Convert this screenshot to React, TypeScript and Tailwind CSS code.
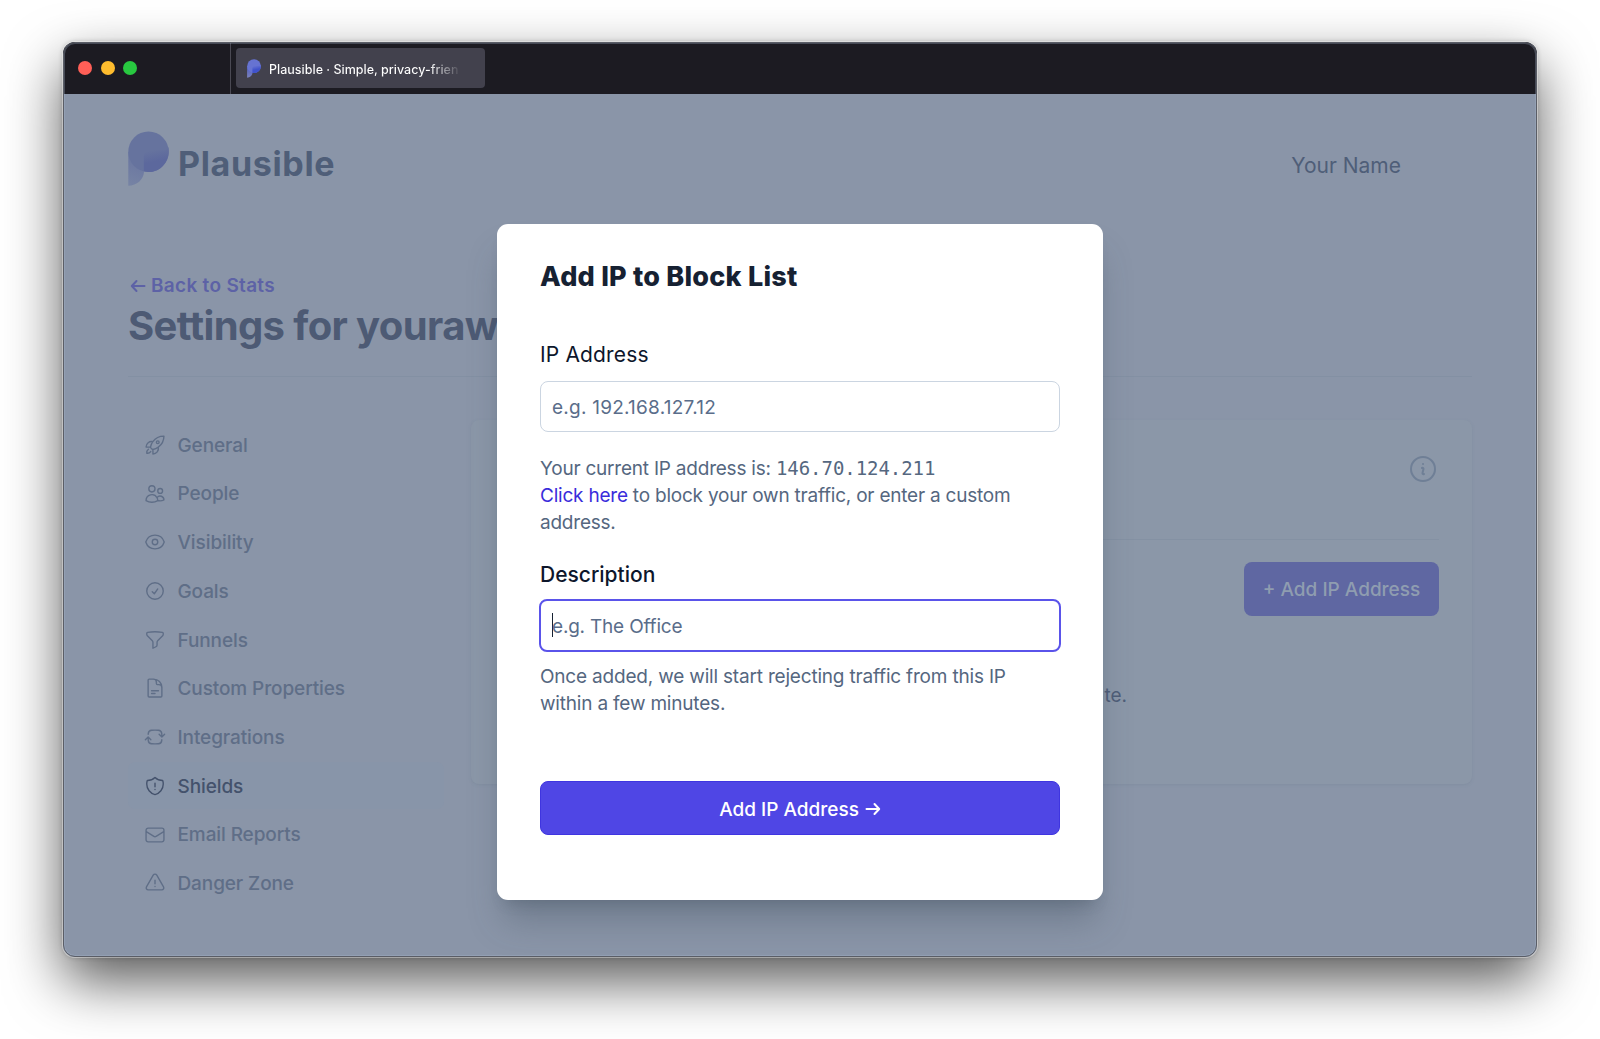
import React, { useId } from "react";
import {
  HiOutlineRocketLaunch,
  HiOutlineUsers,
  HiOutlineEye,
  HiOutlineCheckCircle,
  HiOutlineFunnel,
  HiOutlineDocumentText,
  HiOutlineArrowPathRoundedSquare,
  HiOutlineShieldExclamation,
  HiOutlineEnvelope,
  HiOutlineExclamationTriangle,
  HiOutlineInformationCircle,
} from "react-icons/hi2";

const navItems = [
  { label: "General", Icon: HiOutlineRocketLaunch },
  { label: "People", Icon: HiOutlineUsers },
  { label: "Visibility", Icon: HiOutlineEye },
  { label: "Goals", Icon: HiOutlineCheckCircle },
  { label: "Funnels", Icon: HiOutlineFunnel },
  { label: "Custom Properties", Icon: HiOutlineDocumentText },
  { label: "Integrations", Icon: HiOutlineArrowPathRoundedSquare },
  { label: "Shields", Icon: HiOutlineShieldExclamation, active: true },
  { label: "Email Reports", Icon: HiOutlineEnvelope },
  { label: "Danger Zone", Icon: HiOutlineExclamationTriangle },
];

type LogoProps = { className: string; head: string; body: string; tailFrom: string; tailTo: string };

function LogoMark({ className, head, body, tailFrom, tailTo }: LogoProps) {
  const id = useId();
  return (
    <svg className={className} viewBox="0 0 41 55" fill="none">
      <defs>
        <linearGradient id={id} x1="14" y1="24" x2="4" y2="54" gradientUnits="userSpaceOnUse">
          <stop stopColor={tailFrom} />
          <stop offset="1" stopColor={tailTo} />
        </linearGradient>
        <linearGradient id={`${id}b`} x1="26" y1="19" x2="30" y2="38" gradientUnits="userSpaceOnUse">
          <stop stopColor={head} />
          <stop offset="0.6" stopColor={body} />
        </linearGradient>
      </defs>
      <path d="M0.3 21V54.8C9 54.6 15.5 48.500 16 41L20 21Z" fill={`url(#${id})`} />
      <circle cx="20.5" cy="20.700" r="20.200" fill={head} />
      <path d="M15.800 40.300V25Q16.500 19.500 22 19.200H36Q39.500 19 40.400 16C43 29 33 41.500 20.500 41Q18 41 15.800 40.300Z" fill={`url(#${id}b)`} />
    </svg>
  );
}

function TitleBar() {
  return (
    <div className="flex h-[52px] shrink-0 bg-[#1c1b22]">
      <div className="flex w-[168px] items-center gap-[8.500px] border-r border-[#4a4953] pl-[15px]">
        <span className="size-[14px] rounded-full bg-[#ff5f57]" />
        <span className="size-[14px] rounded-full bg-[#febc2e]" />
        <span className="size-[14px] rounded-full bg-[#28c840]" />
      </div>
      <div className="mt-[6px] ml-[5px] flex h-[40px] w-[249px] items-center rounded-[4px] bg-[#42414d] pl-[11px]">
        <LogoMark className="h-[19px] w-[14px]" head="#6673d2" body="#4052cb" tailFrom="#4f5cc0" tailTo="#7b82bd" />
        <span className="mt-[3px] ml-[8px] bg-linear-to-r from-white from-84% to-white/10 bg-clip-text text-[12.500px] leading-[20px] font-medium tracking-[0.010px] whitespace-nowrap text-transparent">
          Plausible · Simple, privacy-frien
        </span>
      </div>
    </div>
  );
}

function SettingsPage() {
  return (
    <div className="h-full px-[65px] pt-[37px]">
      <header className="flex h-[57px] items-start">
        <LogoMark className="h-[55px] w-[41px]" head="#66739e" body="#5c689d" tailFrom="#6874a0" tailTo="#7683a4" />
        <span className="mt-[13px] ml-[9px] text-[34px] leading-[40px] font-bold tracking-[0.650px] text-[#4f5e78]">Plausible</span>
        <span className="mt-[21px] mr-[71px] ml-auto text-[21px] leading-[28px] text-[#4f5e78]">Your Name</span>
      </header>

      <a className="mt-[84px] flex h-[28px] items-center text-[19px] leading-[28px] font-semibold tracking-[0.300px] text-[#5d62a6]">
        <svg className="mr-[5px] mb-px ml-[2px] h-[14px] w-[16px]" viewBox="0 0 16 14" fill="none" stroke="currentColor" strokeWidth="2" strokeLinecap="round" strokeLinejoin="round">
          <path d="M14.500 7H2M6.500 2L1.800 7L6.500 12" />
        </svg>
        Back to Stats
      </a>
      <h1 className="mt-[2px] text-[40px] leading-[48px] font-bold tracking-[-0.620px] whitespace-nowrap text-[#4d5a74]">Settings for youraw</h1>
      <hr className="mt-[26px] border-[#8390a3]" />

      <div className="mt-[43px] flex gap-[27px]">
        <nav className="mt-[1.500px] flex w-[316px] flex-col gap-[1.700px]">
          {navItems.map(({ label, Icon, active }) => (
            <a
              key={label}
              className={
                active
                  ? "flex h-[47px] items-center rounded-[7px] bg-[#8895a9] pl-[16px] text-[19px] leading-[28px] font-medium tracking-[-0.100px] text-[#44526c]"
                  : "flex h-[47px] items-center pl-[16px] text-[19px] leading-[28px] font-medium tracking-[-0.100px] text-[#5f6e87]"
              }
            >
              <Icon className="mr-[11.500px] size-[22px]" />
              <span className="pt-[1.500px]">{label}</span>
            </a>
          ))}
        </nav>

        <section className="h-[364px] w-[1001px] rounded-[8px] bg-[#8b97a8] px-[33px] pt-[33px] shadow-[0_1px_3px_rgba(110,125,145,0.3)]">
          <div className="flex h-[87px] justify-end border-b border-[#8491a3]">
            <HiOutlineInformationCircle className="size-[32px] text-[#6f7f96]" />
          </div>
          <div className="mt-[22px] flex justify-end">
            <button className="flex h-[54px] w-[195px] items-center justify-center rounded-[8px] bg-[#5f67a2] pt-[2px] text-[19px] leading-[28px] font-medium whitespace-nowrap text-[#8f9db0]">
              + Add IP Address
            </button>
          </div>
          <p className="mt-[66px] mr-[312px] text-right text-[19px] leading-[28px] text-[#4f5e78]">te.</p>
        </section>
      </div>
    </div>
  );
}

function BlockListDialog() {
  return (
    <div
      role="dialog"
      className="absolute top-[130px] left-[433.500px] h-[676px] w-[606.500px] rounded-[11px] bg-white pt-[33px] pl-[43.500px] text-[#55677f] shadow-[0_27px_34px_-7px_rgba(60,75,90,0.35),0_10px_14px_-8px_rgba(60,75,90,0.3)]"
    >
      <h2 className="text-[27px] leading-[40px] font-extrabold tracking-[0.220px] text-[#162132]">Add IP to Block List</h2>

      <label className="mt-[44px] block text-[21px] leading-[28px] tracking-[0.150px] text-[#0d162b]">IP Address</label>
      <div className="mt-[12px] flex h-[51px] w-[520px] items-center rounded-[8px] border border-[#cbd5e1] pt-[3px] pl-[11px] text-[19px] tracking-[0.240px] text-[#5a6d8a]">
        e.g. 192.168.127.12
      </div>

      <p className="mt-[22.600px] text-[19px] leading-[27.300px] tracking-[-0.220px] whitespace-nowrap">
        Your current IP address is: <span className="font-['DejaVu_Sans_Mono',monospace] tracking-[-0.050px]">146.70.124.211</span>
        <br />
        <a className="text-[#3a2ddb]">Click here</a> to block your own traffic, or enter a custom
        <br />
        address.
      </p>

      <label className="mt-[24.400px] block text-[21px] leading-[28px] font-medium text-[#0d162b]">Description</label>
      <div className="mt-[10px] -ml-px flex h-[53px] w-[522px] items-center rounded-[8px] border-2 border-[#5a53ea] pl-[11px] text-[19px] tracking-[-0.200px] text-[#5a6d8a]">
        <span className="-mr-px h-[24px] w-px bg-[#162132]" />
        <span className="pt-[3px]">e.g. The Office</span>
      </div>

      <p className="mt-[11px] text-[19px] leading-[27.300px] tracking-[-0.190px] whitespace-nowrap">
        Once added, we will start rejecting traffic from this IP
        <br />
        within a few minutes.
      </p>

      <button className="mt-[64px] flex h-[54px] w-[520px] items-center justify-center rounded-[8px] border border-[#3f35e0] bg-[#4f46e5] pt-[3px] text-[19px] leading-[28px] font-medium text-white">
        Add IP Address
        <svg className="mb-[2px] ml-[6px] h-[14px] w-[16px]" viewBox="0 0 16 14" fill="none" stroke="currentColor" strokeWidth="2" strokeLinecap="round" strokeLinejoin="round">
          <path d="M1.500 7H14M9.500 2L14.200 7L9.500 12" />
        </svg>
      </button>
    </div>
  );
}

export default function App() {
  return (
    <div className="h-[1039px] w-[1600px] overflow-hidden bg-white px-[63px] pt-[42px] font-['Inter',sans-serif]">
      <div className="relative h-[915px] w-[1474px] rounded-[12px] shadow-[0_0_0_1px_rgba(255,255,255,0.4),0_0_5px_rgba(0,0,0,0.25),0_24px_56px_rgba(0,0,0,0.66)]">
        <div className="flex h-full flex-col overflow-hidden rounded-[12px] bg-[#8a95a8]">
          <TitleBar />
          <div className="relative flex-1">
            <SettingsPage />
            <BlockListDialog />
          </div>
        </div>
        <div className="pointer-events-none absolute inset-0 rounded-[12px] border border-[#5a5d66] shadow-[inset_0_0_0_1px_rgba(170,185,210,0.3)]" />
      </div>
    </div>
  );
}
